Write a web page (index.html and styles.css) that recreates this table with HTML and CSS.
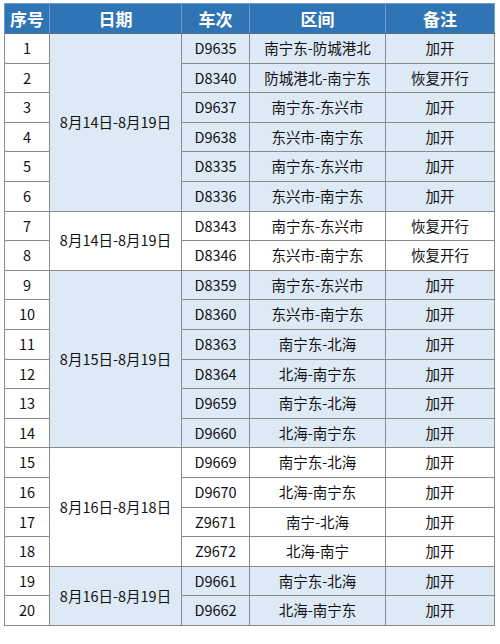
FILE: index.html
```html
<!DOCTYPE html>
<html lang="zh-CN">
<head>
<meta charset="utf-8">
<link rel="stylesheet" href="styles.css">
</head>
<body>
<table class="tbl">
<colgroup>
<col class="c1"><col class="c2"><col class="c3"><col class="c4"><col class="c5">
</colgroup>
<thead>
<tr><th>序号</th><th>日期</th><th>车次</th><th>区间</th><th>备注</th></tr>
</thead>
<tbody>
<tr class="sh"><td class="n">1</td><td class="d" rowspan="6">8月14日-8月19日</td><td>D9635</td><td>南宁东-防城港北</td><td>加开</td></tr>
<tr class="sh"><td class="n">2</td><td>D8340</td><td>防城港北-南宁东</td><td>恢复开行</td></tr>
<tr class="sh"><td class="n">3</td><td>D9637</td><td>南宁东-东兴市</td><td>加开</td></tr>
<tr class="sh"><td class="n">4</td><td>D9638</td><td>东兴市-南宁东</td><td>加开</td></tr>
<tr class="sh"><td class="n">5</td><td>D8335</td><td>南宁东-东兴市</td><td>加开</td></tr>
<tr class="sh"><td class="n">6</td><td>D8336</td><td>东兴市-南宁东</td><td>加开</td></tr>
<tr><td class="n">7</td><td class="d" rowspan="2">8月14日-8月19日</td><td>D8343</td><td>南宁东-东兴市</td><td>恢复开行</td></tr>
<tr><td class="n">8</td><td>D8346</td><td>东兴市-南宁东</td><td>恢复开行</td></tr>
<tr class="sh"><td class="n">9</td><td class="d" rowspan="6">8月15日-8月19日</td><td>D8359</td><td>南宁东-东兴市</td><td>加开</td></tr>
<tr class="sh"><td class="n">10</td><td>D8360</td><td>东兴市-南宁东</td><td>加开</td></tr>
<tr class="sh"><td class="n">11</td><td>D8363</td><td>南宁东-北海</td><td>加开</td></tr>
<tr class="sh"><td class="n">12</td><td>D8364</td><td>北海-南宁东</td><td>加开</td></tr>
<tr class="sh"><td class="n">13</td><td>D9659</td><td>南宁东-北海</td><td>加开</td></tr>
<tr class="sh"><td class="n">14</td><td>D9660</td><td>北海-南宁东</td><td>加开</td></tr>
<tr><td class="n">15</td><td class="d" rowspan="4">8月16日-8月18日</td><td>D9669</td><td>南宁东-北海</td><td>加开</td></tr>
<tr><td class="n">16</td><td>D9670</td><td>北海-南宁东</td><td>加开</td></tr>
<tr><td class="n">17</td><td>Z9671</td><td>南宁-北海</td><td>加开</td></tr>
<tr><td class="n">18</td><td>Z9672</td><td>北海-南宁</td><td>加开</td></tr>
<tr class="sh"><td class="n">19</td><td class="d" rowspan="2">8月16日-8月19日</td><td>D9661</td><td>南宁东-北海</td><td>加开</td></tr>
<tr class="sh"><td class="n">20</td><td>D9662</td><td>北海-南宁东</td><td>加开</td></tr>
</tbody>
</table>
</body>
</html>
```

FILE: styles.css
```css
html, body {
  margin: 0;
  padding: 0;
  background: #ffffff;
}
body {
  padding: 3px 0 0 4px;
  font-family: "Noto Sans CJK SC", "Noto Sans", sans-serif;
  color: #111111;
}
.tbl {
  border-collapse: collapse;
  table-layout: fixed;
  width: 490px;
  font-size: 14.5px;
}
.c1 { width: 45px; }
.c2 { width: 132px; }
.c3 { width: 68px; }
.c4 { width: 136px; }
.c5 { width: 109px; }
.tbl th {
  background: #2f75b5;
  color: #ffffff;
  font-size: 17px;
  font-weight: 700;
  height: 29px;
  padding: 0;
  border: 1px solid #6f9ccc;
  border-bottom: 1px solid #5a6f86;
  text-align: center;
  vertical-align: middle;
  line-height: 1;
}
.tbl td {
  height: 28.6px;
  padding: 0;
  border: 1px solid #8a8a8a;
  text-align: center;
  vertical-align: middle;
  line-height: 1;
  background: #ffffff;
}
.tbl tr.sh td {
  background: #dde9f5;
}
.tbl tr.sh td.n {
  background: #ffffff;
}
```
